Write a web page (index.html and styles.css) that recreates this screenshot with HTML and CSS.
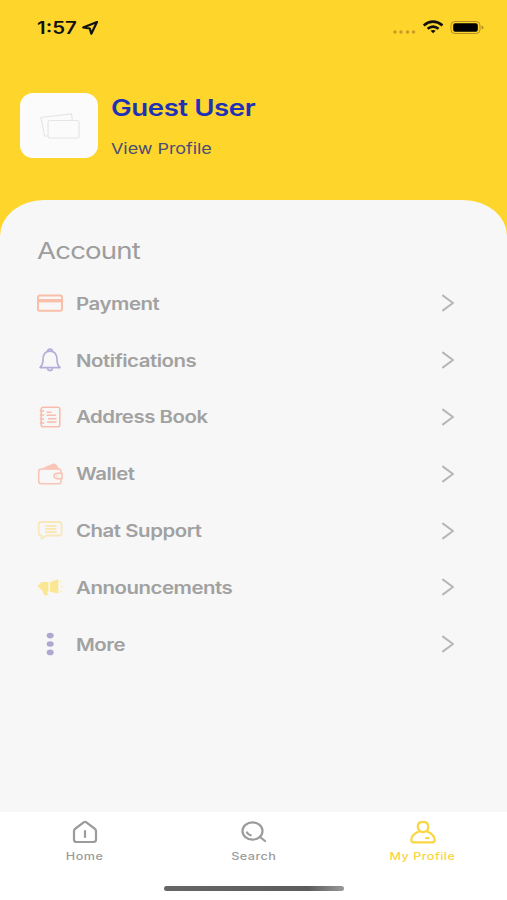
FILE: index.html
```html
<!DOCTYPE html>
<html lang="en">
<head>
<meta charset="UTF-8" />
<meta name="viewport" content="width=device-width, initial-scale=1" />
<title>My Profile</title>
<link rel="stylesheet" href="styles.css">
</head>
<body>

<header class="header">
  <div class="status-bar">
    <span class="time">1:57</span>
    <svg class="location" width="18" height="16" viewBox="0 0 18 16"><path d="M16 2L2.2 7.4l6.6 1.1 1.5 5.3z" fill="none" stroke="#111" stroke-width="2.2" stroke-linejoin="round"/></svg>
    <svg class="status-icons" width="92" height="16" viewBox="0 0 92 16">
      <g fill="#c69b26"><circle cx="3" cy="12" r="1.7"/><circle cx="9" cy="12" r="1.7"/><circle cx="15.5" cy="12" r="1.7"/><circle cx="21.5" cy="12" r="1.7"/></g>
      <g fill="none" stroke="#111" stroke-width="2.6"><path d="M31.7 5.4Q41 -2 50.5 5.4"/><path d="M35.6 8.8Q41 4.3 46.6 8.8"/></g>
      <path d="M38.5 10.8Q41.1 9 43.7 10.8L41.1 13.2z" fill="#111"/>
      <rect x="59" y="1.5" width="29" height="12" rx="3.8" fill="none" stroke="#b48f25"/>
      <rect x="61.2" y="3.2" width="24.6" height="8.6" rx="2" fill="#000"/>
      <path d="M89.5 5.5q2 .5 2 2t-2 2z" fill="#b48f25"/>
    </svg>
  </div>
  <div class="user">
    <div class="avatar">
      <svg width="40" height="26" viewBox="0 0 40 26" fill="#fbfbfb" stroke="#e5e5e5" stroke-width="1.2"><path d="M7 23.2L4.5 23 1 4.5 31.5 1l.8 6"/><rect x="8" y="7.5" width="31" height="17.5" rx="1.8"/></svg>
    </div>
    <div class="user-text">
      <div class="user-name">Guest User</div>
      <div class="user-link">View Profile</div>
    </div>
  </div>
</header>

<main class="panel">
  <h2 class="title">Account</h2>
  <ul class="menu">
    <li class="menu-item">
      <svg class="icon" viewBox="0 0 28 26" fill="none" stroke="#f9bfa9" stroke-width="2"><rect x="2" y="5.5" width="24" height="15.2" rx="1.5"/><path d="M2 10.7h24" stroke-width="3.4"/></svg>
      <span class="label">Payment</span>
      <svg class="arrow" viewBox="0 0 14 18"><path d="M2 1.6l10 7.4-10 7.4"/></svg>
    </li>
    <li class="menu-item">
      <svg class="icon" viewBox="0 0 28 26" fill="none" stroke="#b5add9" stroke-width="1.6" stroke-linejoin="round"><path d="M4 20.6c2.2-2 3-4 3-7.5 0-5.5 2.5-9 7-9s7 3.5 7 9c0 3.5.8 5.5 3 7.5z"/><path d="M11.7 4.6c0-3.3 4.6-3.3 4.6 0M11.4 21.2c.8 3 4.4 3 5.2 0"/></svg>
      <span class="label">Notifications</span>
      <svg class="arrow" viewBox="0 0 14 18"><path d="M2 1.6l10 7.4-10 7.4"/></svg>
    </li>
    <li class="menu-item">
      <svg class="icon" viewBox="0 0 28 26" fill="none" stroke="#f9bdad" stroke-width="1.6"><rect x="5.2" y="3.2" width="18.6" height="19.6" rx="2"/><path d="M3.8 7h4.4M3.8 11h4.4M3.8 15h4.4M3.8 19h4.4M10.5 8.2h5M10.5 11.3h9.5M12 14.7h8.5M11 18h9.5"/></svg>
      <span class="label">Address Book</span>
      <svg class="arrow" viewBox="0 0 14 18"><path d="M2 1.6l10 7.4-10 7.4"/></svg>
    </li>
    <li class="menu-item">
      <svg class="icon" viewBox="0 0 28 26" fill="none" stroke="#f9c5b7" stroke-width="1.6"><path d="M5.5 8h17q2.500 0 2.500 2.500v10q0 2.300-2.500 2.300h-17q-2.800 0-2.800-2.500V10.500Q2.700 8 5.500 8z"/><path d="M7.500 7.500l10-4.200q1.500-.4 2.300 1l2.200 3.200z" fill="#f9c5b7"/><path d="M26 12.400h-5q-3 .3-3 2.600t3 2.600h5z" fill="#f8f8f8"/><path d="M20.500 15h1"/></svg>
      <span class="label">Wallet</span>
      <svg class="arrow" viewBox="0 0 14 18"><path d="M2 1.6l10 7.4-10 7.4"/></svg>
    </li>
    <li class="menu-item">
      <svg class="icon" viewBox="0 0 28 26" fill="none" stroke="#fae8ba" stroke-width="1.8" stroke-linejoin="round"><path d="M5 4h18q2.600 0 2.600 2.500V15q0 2.500-2.600 2.500H10.500l-5 3.300v-3.300Q2.700 17.300 2.700 15V6.500Q2.700 4 5 4z"/><path d="M9 8h11.500M9 11h11.500M9 14h11.500"/></svg>
      <span class="label">Chat Support</span>
      <svg class="arrow" viewBox="0 0 14 18"><path d="M2 1.6l10 7.4-10 7.4"/></svg>
    </li>
    <li class="menu-item">
      <svg class="icon" viewBox="0 0 28 26" fill="#fbe793"><path d="M5.500 8h7v9.500l-1.500 1 1.500 2q-3 2.200-4.600 0L6.500 17l-5-4.700z"/><path d="M14 8.200l7.500-3q.8 0 .8 1v12.500q0 1-.8.900L14 17.500z"/><path d="M24 7.500l1.500-.5M24.800 12.500h2M24 17l1.500.8" stroke="#fbedb5" stroke-width="1.500"/></svg>
      <span class="label">Announcements</span>
      <svg class="arrow" viewBox="0 0 14 18"><path d="M2 1.6l10 7.4-10 7.4"/></svg>
    </li>
    <li class="menu-item">
      <svg class="icon" viewBox="0 0 28 26" fill="#ada7d1"><ellipse cx="14.200" cy="4.600" rx="3.500" ry="2.800"/><ellipse cx="14.200" cy="13" rx="3.500" ry="2.800"/><ellipse cx="14.200" cy="21.400" rx="3.500" ry="2.800"/></svg>
      <span class="label">More</span>
      <svg class="arrow" viewBox="0 0 14 18"><path d="M2 1.6l10 7.4-10 7.4"/></svg>
    </li>
  </ul>
</main>

<footer class="footer">
  <nav class="tabs">
    <a class="tab">
      <svg width="28" height="24" viewBox="0 0 28 24"><path d="M4.500 8.500L13 2.200q1-.7 2 0l8.500 6.300q1.500 1 1.500 2.500v8.500q0 2.500-2.500 2.500h-17Q3 22 3 19.500V11q0-1.500 1.500-2.500zM14 11v6"/></svg>
      <span>Home</span>
    </a>
    <a class="tab">
      <svg width="28" height="24" viewBox="0 0 28 24"><ellipse cx="12.500" cy="11" rx="10" ry="8.600"/><path d="M20 17l5 4M7 12.500q1.200 2.200 3.700 2.800"/></svg>
      <span>Search</span>
    </a>
    <a class="tab active">
      <svg width="28" height="24" viewBox="0 0 28 24"><path d="M8.800 6.200Q9 1.800 14 1.800t5.200 4.400-2.700 5.300q-2.500 1.200-5 0-2.700-1.500-2.700-5.300zM10 11.500Q2.500 14.500 2.300 20q0 2.300 2.500 2.300h18.400q2.500 0 2.500-2.300Q25.500 14.500 18 11.500M17 18h2.500"/></svg>
      <span>My Profile</span>
    </a>
  </nav>
  <div class="home-bar"></div>
</footer>

</body>
</html>
```

FILE: styles.css
```css
* {
  box-sizing: border-box;
}
body {
  margin: 0;
  height: 900px;
  display: flex;
  flex-direction: column;
  font-family: Inter, "Liberation Sans", sans-serif;
  background-color: #fed52b;
  overflow: hidden;
}
svg {
  display: block;
  flex: none;
}
.header {
  height: 200px;
  flex: none;
}
.status-bar {
  display: flex;
  align-items: center;
  height: 55px;
  padding: 1px 23px 0 37px;
}
.time {
  width: 44px;
  font-size: 17px;
  font-weight: 600;
  color: #111;
  white-space: nowrap;
  transform: scaleX(1.2);
  transform-origin: left;
}
.status-icons {
  margin-left: auto;
}
.user {
  display: flex;
  gap: 13px;
  padding: 38px 20px 0;
}
.avatar {
  display: flex;
  align-items: center;
  justify-content: center;
  width: 78px;
  height: 65px;
  border-radius: 13px;
  background-color: #fbfbfb;
}
.avatar svg {
  margin-left: 1px;
}
.user-text {
  display: flex;
  flex-direction: column;
  gap: 16px;
  padding-top: 1px;
  transform: scaleX(1.2);
  transform-origin: left;
}
.user-name {
  font-size: 23px;
  line-height: 28px;
  font-weight: 600;
  letter-spacing: -0.35px;
  color: #1f31b5;
}
.user-link {
  font-size: 15px;
  line-height: 22px;
  letter-spacing: -0.05px;
  color: #4c4c76;
}
.panel {
  flex: 1;
  padding: 35px 38px 0;
  border-radius: 44px 44px 0 0 / 36px 36px 0 0;
  background-color: #f7f7f7;
}
.title {
  width: 200px;
  margin: 0 0 0 -1px;
  font-size: 23px;
  line-height: 32px;
  font-weight: 400;
  letter-spacing: -0.7px;
  color: #9d9d9d;
  transform: scaleX(1.2);
  transform-origin: left;
}
.menu {
  margin: 8px 0 0;
  padding: 0;
  list-style: none;
}
.menu-item {
  display: flex;
  align-items: center;
  height: 56.8px;
}
.icon {
  width: 28px;
  height: 26px;
  margin-left: -2px;
}
.label {
  margin-left: 12px;
  padding-top: 1px;
  font-size: 17px;
  font-weight: 600;
  letter-spacing: -0.38px;
  color: #a1a1a1;
  white-space: nowrap;
  transform: scaleX(1.2);
  transform-origin: left;
}
.arrow {
  width: 14px;
  height: 18px;
  margin-left: auto;
  margin-right: 14px;
  fill: none;
  stroke: #b6b6b6;
  stroke-width: 2;
  stroke-linecap: round;
  stroke-linejoin: round;
}
.footer {
  height: 88px;
  flex: none;
  background-color: #fff;
}
.tabs {
  display: grid;
  grid-template-columns: repeat(3, 1fr);
  height: 74px;
  padding-top: 8px;
}
.tab {
  display: flex;
  flex-direction: column;
  align-items: center;
  color: #9b9b9b;
}
.tab svg {
  fill: none;
  stroke: currentColor;
  stroke-width: 2.2;
  stroke-linecap: round;
  stroke-linejoin: round;
}
.tab span {
  margin-top: 6px;
  font-size: 10.5px;
  line-height: 14px;
  font-weight: 500;
  letter-spacing: 0.4px;
  transform: scaleX(1.2);
}
.tab.active {
  color: #f9d642;
}
.home-bar {
  width: 180px;
  height: 5px;
  margin: 0 auto;
  border-radius: 3px;
  background: linear-gradient(to right, #666, #5c5c5c 80%, #999);
}
```
